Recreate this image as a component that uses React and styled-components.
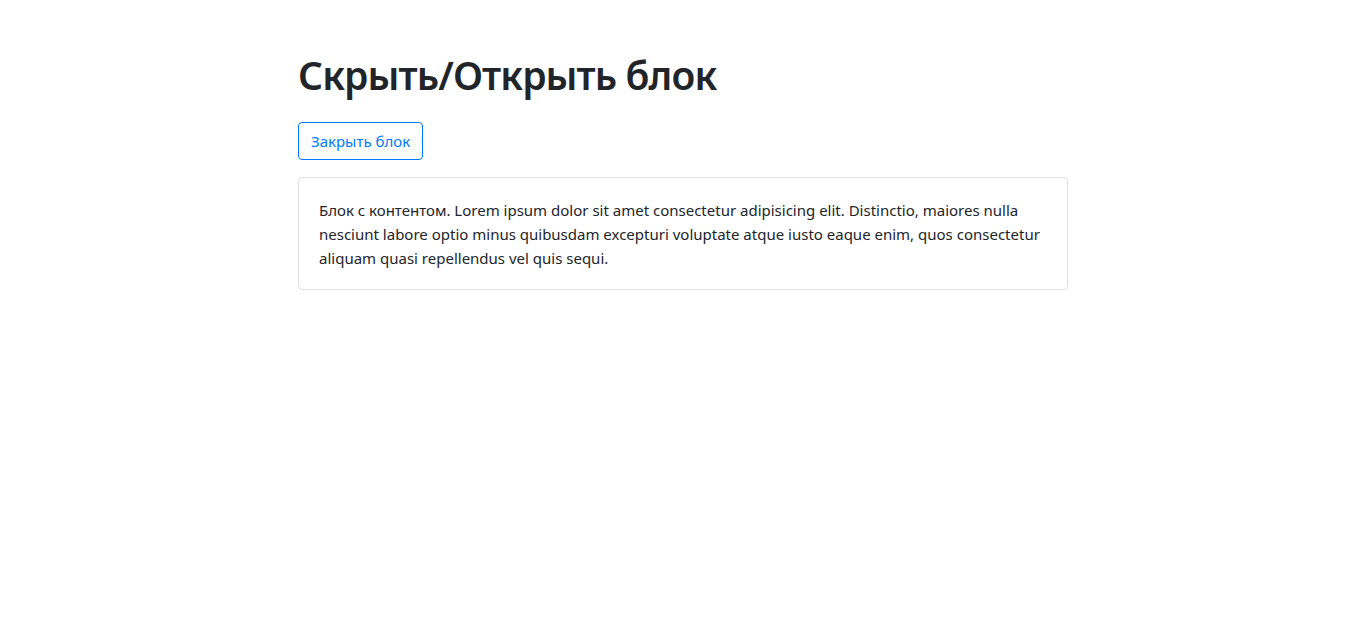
import React, { useState } from "react";
import styled, { createGlobalStyle } from "styled-components";
// --------------------------
const GlobalStyle = createGlobalStyle`
  body {
    margin: 0;
    background: #fff;
    font-family: "Noto Sans", "Open Sans", sans-serif;
    color: #212529;
    font-size: 15px;
    line-height: 24px;
  }
`;

const Container = styled.div`
  width: 770px;
  margin-left: 298px;
  padding-top: 51px;
  display: flex;
  flex-direction: column;
  align-items: flex-start;
`;

const Title = styled.h1`
  margin: 0 0 23px;
  font-size: 39px;
  font-weight: 600;
  line-height: 48px;
  letter-spacing: -0.9px;
  color: #212529;
`;

const OutlineButton = styled.button`
  font-family: inherit;
  font-size: 15px;
  line-height: 24px;
  padding: 6px 12px;
  color: #007bff;
  background: transparent;
  border: 1px solid #007bff;
  border-radius: 4px;
  cursor: pointer;
`;

const Card = styled.div`
  align-self: stretch;
  margin-top: 17px;
  padding: 20px 20px 19px;
  border: 1px solid rgba(0, 0, 0, 0.125);
  border-radius: 4px;
`;

const Text = styled.p`
  margin: 0;
`;
// --------------------------

const App = () => {
  const [open, setOpen] = useState(true);
  return (
    <>
      <GlobalStyle />
      <Container>
        <Title>Скрыть/Открыть блок</Title>
        <OutlineButton onClick={() => setOpen(!open)}>
          {open ? "Закрыть блок" : "Открыть блок"}
        </OutlineButton>
        {open && (
          <Card>
            <Text>
              Блок с контентом. Lorem ipsum dolor sit amet consectetur
              adipisicing elit. Distinctio, maiores nulla nesciunt labore optio
              minus quibusdam excepturi voluptate atque iusto eaque enim, quos
              consectetur aliquam quasi repellendus vel quis sequi.
            </Text>
          </Card>
        )}
      </Container>
    </>
  );
};
// --------------------------
export default App;
